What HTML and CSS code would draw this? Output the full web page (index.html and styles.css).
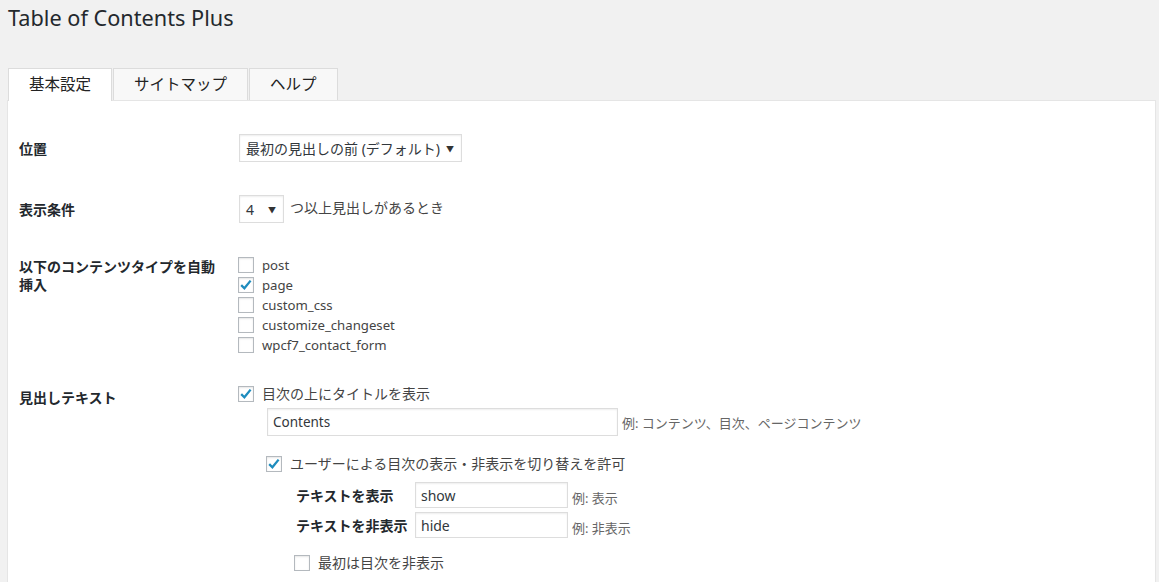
FILE: index.html
```html
<!DOCTYPE html>
<html lang="ja">
<head>
<meta charset="utf-8">
<title>Table of Contents Plus</title>
<link rel="stylesheet" href="styles.css">
</head>
<body>
<div class="wrap">
  <h1 class="title">Table of Contents Plus</h1>
  <div class="tabs">
    <span class="tab active">基本設定</span>
    <span class="tab">サイトマップ</span>
    <span class="tab">ヘルプ</span>
  </div>
  <div class="panel">
    <div class="row r1">
      <div class="th">位置</div>
      <div class="td">
        <div class="select wide"><span>最初の見出しの前 (デフォルト)</span><span class="arrow">▼</span></div>
      </div>
    </div>
    <div class="row r2">
      <div class="th">表示条件</div>
      <div class="td inline">
        <div class="select small"><span>4</span><span class="arrow">▼</span></div>
        <span class="after">つ以上見出しがあるとき</span>
      </div>
    </div>
    <div class="row r3">
      <div class="th th-tight">以下のコンテンツタイプを自動挿入</div>
      <div class="td types">
        <div class="line"><span class="cb"></span>post</div>
        <div class="line"><span class="cb"><svg viewBox="0 0 16 16" width="16" height="16"><path d="M3.2 8.2 L6.4 11.3 L12.6 3.6" fill="none" stroke="#1e8cbe" stroke-width="2.3"/></svg></span>page</div>
        <div class="line"><span class="cb"></span>custom_css</div>
        <div class="line"><span class="cb"></span>customize_changeset</div>
        <div class="line"><span class="cb"></span>wpcf7_contact_form</div>
      </div>
    </div>
    <div class="row r4">
      <div class="th th-r4">見出しテキスト</div>
      <div class="td">
        <div class="line"><span class="cb"><svg viewBox="0 0 16 16" width="16" height="16"><path d="M3.2 8.2 L6.4 11.3 L12.6 3.6" fill="none" stroke="#1e8cbe" stroke-width="2.3"/></svg></span>目次の上にタイトルを表示</div>
        <div class="input-row">
          <div class="input title-input">Contents</div>
          <span class="hint">例: コンテンツ、目次、ページコンテンツ</span>
        </div>
        <div class="line toggle"><span class="cb"><svg viewBox="0 0 16 16" width="16" height="16"><path d="M3.2 8.2 L6.4 11.3 L12.6 3.6" fill="none" stroke="#1e8cbe" stroke-width="2.3"/></svg></span>ユーザーによる目次の表示・非表示を切り替えを許可</div>
        <div class="sub">
          <div class="sub-label">テキストを表示</div>
          <div class="input small-input">show</div>
          <span class="hint">例: 表示</span>
          <div class="sub-label">テキストを非表示</div>
          <div class="input small-input">hide</div>
          <span class="hint">例: 非表示</span>
        </div>
        <div class="line hide-init"><span class="cb"></span>最初は目次を非表示</div>
      </div>
    </div>
  </div>
</div>
</body>
</html>
```
FILE: styles.css
```css
html, body {
  margin: 0;
  padding: 0;
  background: #f1f1f1;
}
body {
  font-family: "Noto Sans", "Noto Sans CJK JP", sans-serif;
  font-size: 14px;
  color: #444;
  height: 582px;
  overflow: hidden;
}
.wrap {
  margin: 0 3px 0 7px;
}
.title {
  margin: 0;
  padding-left: 1px;
  font-weight: 400;
  font-size: 21.7px;
  line-height: 36px;
  color: #23282d;
}
.tabs {
  display: flex;
  margin-top: 32px;
  height: 32px;
  padding-left: 1px;
  position: relative;
  z-index: 1;
}
.tab {
  box-sizing: border-box;
  height: 32px;
  padding: 0 20px;
  border: 1px solid #dcdcdc;
  border-bottom: 0;
  background: #f8f8f8;
  font-size: 15.5px;
  line-height: 31px;
  color: #222;
}
.tab + .tab {
  margin-left: 1px;
}
.tab.active {
  background: #fff;
  height: 33px;
}
.panel {
  background: #fff;
  border: 1px solid #e5e5e5;
  padding: 0 10px;
  min-height: 600px;
}
.row {
  display: grid;
  grid-template-columns: 200px 1fr;
  column-gap: 20px;
}
.r1 { padding-top: 33px; }
.r2 { padding-top: 33px; }
.r3 { padding-top: 32px; }
.r4 { padding-top: 29px; }
.th {
  font-weight: 700;
  color: #23282d;
  line-height: 18px;
  padding-top: 6px;
  padding-left: 1px;
}
.th-tight {
  padding-top: 3px;
}
.th-r4 {
  padding-top: 5px;
}
.td.inline {
  display: flex;
  align-items: center;
  gap: 6px;
}
.after {
  position: relative;
  top: -2px;
}
.select {
  box-sizing: border-box;
  display: flex;
  align-items: center;
  height: 28px;
  margin-left: 1px;
  padding: 0 7px 0 6px;
  border: 1px solid #ddd;
  background: #fff;
  color: #32373c;
  box-shadow: inset 0 1px 2px rgba(0, 0, 0, 0.07);
}
.select .arrow {
  margin-left: auto;
  font-size: 8px;
  color: #333;
}
.select.wide { width: 223px; }
.select.small { width: 45px; }
.line {
  display: flex;
  align-items: center;
  height: 20px;
  line-height: 20px;
}
.types .line {
  font-size: 13.2px;
}
.cb {
  box-sizing: border-box;
  flex: none;
  width: 16px;
  height: 16px;
  margin-right: 8px;
  border: 1px solid #b4b9be;
  background: #fff;
  box-shadow: inset 0 1px 2px rgba(0, 0, 0, 0.1);
  position: relative;
}
.cb svg {
  position: absolute;
  left: -1px;
  top: -1px;
}
.input-row {
  display: flex;
  align-items: center;
  margin-top: 4px;
  padding-left: 29px;
}
.input {
  box-sizing: border-box;
  display: flex;
  align-items: center;
  padding-left: 5px;
  border: 1px solid #ddd;
  background: #fff;
  color: #32373c;
  box-shadow: inset 0 1px 2px rgba(0, 0, 0, 0.07);
}
.title-input {
  width: 351px;
  height: 28px;
  font-size: 13.5px;
}
.hint {
  margin-left: 4px;
  font-size: 13px;
  color: #666;
}
.toggle {
  margin-top: 18px;
  padding-left: 28px;
}
.sub {
  display: grid;
  grid-template-columns: 119px 153px auto;
  row-gap: 4px;
  align-items: center;
  margin-top: 8px;
  padding-left: 58px;
}
.sub-label {
  font-weight: 700;
  color: #23282d;
}
.small-input {
  height: 26px;
}
.sub .hint {
  position: relative;
  top: 2px;
}
.hide-init {
  margin-top: 15px;
  padding-left: 56px;
}
```
